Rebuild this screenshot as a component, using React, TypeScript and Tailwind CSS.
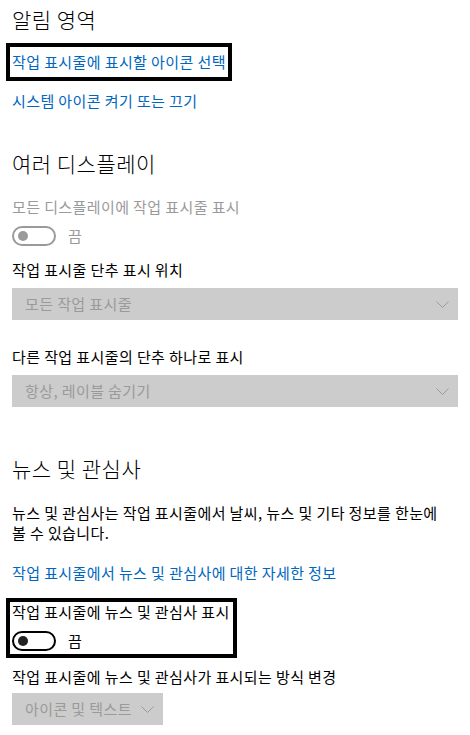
import React from "react";

const Chevron: React.FC = () => (
    <svg width="13" height="7" viewBox="0 0 13 7" className="shrink-0">
        <polyline points="0.5,0.5 6.5,6.5 12.5,0.5" fill="none" stroke="#9a9a9a" strokeWidth="1" />
    </svg>
);

const Toggle: React.FC<{ disabled?: boolean }> = ({ disabled }) => (
    <div className="flex items-center h-5">
        <div
            className={
                disabled
                    ? "w-[44px] h-5 rounded-full border-2 border-[#9a9a9a] flex items-center pl-[4px]"
                    : "w-[44px] h-5 rounded-full border-2 border-black flex items-center pl-[4px]"
            }
        >
            <div className={disabled ? "w-[10px] h-[10px] rounded-full bg-[#9a9a9a]" : "w-[10px] h-[10px] rounded-full bg-[#222]"} />
        </div>
        <span className={disabled ? "ml-3 text-[#9a9a9a]" : "ml-3 text-black"}>끔</span>
    </div>
);

const Dropdown: React.FC<{ label: string; wide?: boolean }> = ({ label, wide }) => (
    <div
        className={
            wide
                ? "h-8 bg-[#cccccc] flex items-center justify-between pl-[13px] pr-[9px]"
                : "h-8 w-[151px] bg-[#cccccc] flex items-center justify-between pl-[13px] pr-[9px]"
        }
    >
        <span className="text-[#9a9a9a]">{label}</span>
        <Chevron />
    </div>
);

const App: React.FC = () => {
    return (
        <div
            className="w-[470px] h-[735px] overflow-hidden bg-white px-3 pt-[5px] text-[15px] leading-5 tracking-[0.4px] text-black"
            style={{ fontFamily: '"Noto Sans CJK KR", "Noto Sans", sans-serif' }}
        >
            {/* 알림 영역 */}
            <h2 className="text-[21px] leading-7 font-light tracking-[0.5px]">알림 영역</h2>
            <div className="mt-[10px] -ml-[6px] inline-block border-4 border-black pl-[2px] pr-[2px] py-[5px]">
                <span className="text-[#0067c0]">작업 표시줄에 표시할 아이콘 선택</span>
            </div>
            <div className="mt-[10px] text-[#0067c0]">시스템 아이콘 켜기 또는 끄기</div>

            {/* 여러 디스플레이 */}
            <h2 className="mt-[38px] text-[21px] leading-7 font-light tracking-[0.5px]">여러 디스플레이</h2>
            <div className="mt-5 text-[#9a9a9a]">모든 디스플레이에 작업 표시줄 표시</div>
            <div className="mt-[9px]">
                <Toggle disabled />
            </div>
            <div className="mt-[14px]">작업 표시줄 단추 표시 위치</div>
            <div className="mt-2">
                <Dropdown label="모든 작업 표시줄" wide />
            </div>
            <div className="mt-[27px]">다른 작업 표시줄의 단추 하나로 표시</div>
            <div className="mt-2">
                <Dropdown label="항상, 레이블 숨기기" wide />
            </div>

            {/* 뉴스 및 관심사 */}
            <h2 className="mt-[47px] text-[21px] leading-7 font-light tracking-[0.5px]">뉴스 및 관심사</h2>
            <p className="mt-[21px]">
                뉴스 및 관심사는 작업 표시줄에서 날씨, 뉴스 및 기타 정보를 한눈에
                <br />
                볼 수 있습니다.
            </p>
            <div className="mt-5 text-[#0067c0]">작업 표시줄에서 뉴스 및 관심사에 대한 자세한 정보</div>
            <div className="mt-[15px] -ml-[6px] inline-block border-4 border-black pl-[2px] pr-[3px] pb-[3px]">
                <div>작업 표시줄에 뉴스 및 관심사 표시</div>
                <div className="mt-[9px]">
                    <Toggle />
                </div>
            </div>
            <div className="mt-[9px]">작업 표시줄에 뉴스 및 관심사가 표시되는 방식 변경</div>
            <div className="mt-[6px]">
                <Dropdown label="아이콘 및 텍스트" />
            </div>
        </div>
    );
};

export default App;
